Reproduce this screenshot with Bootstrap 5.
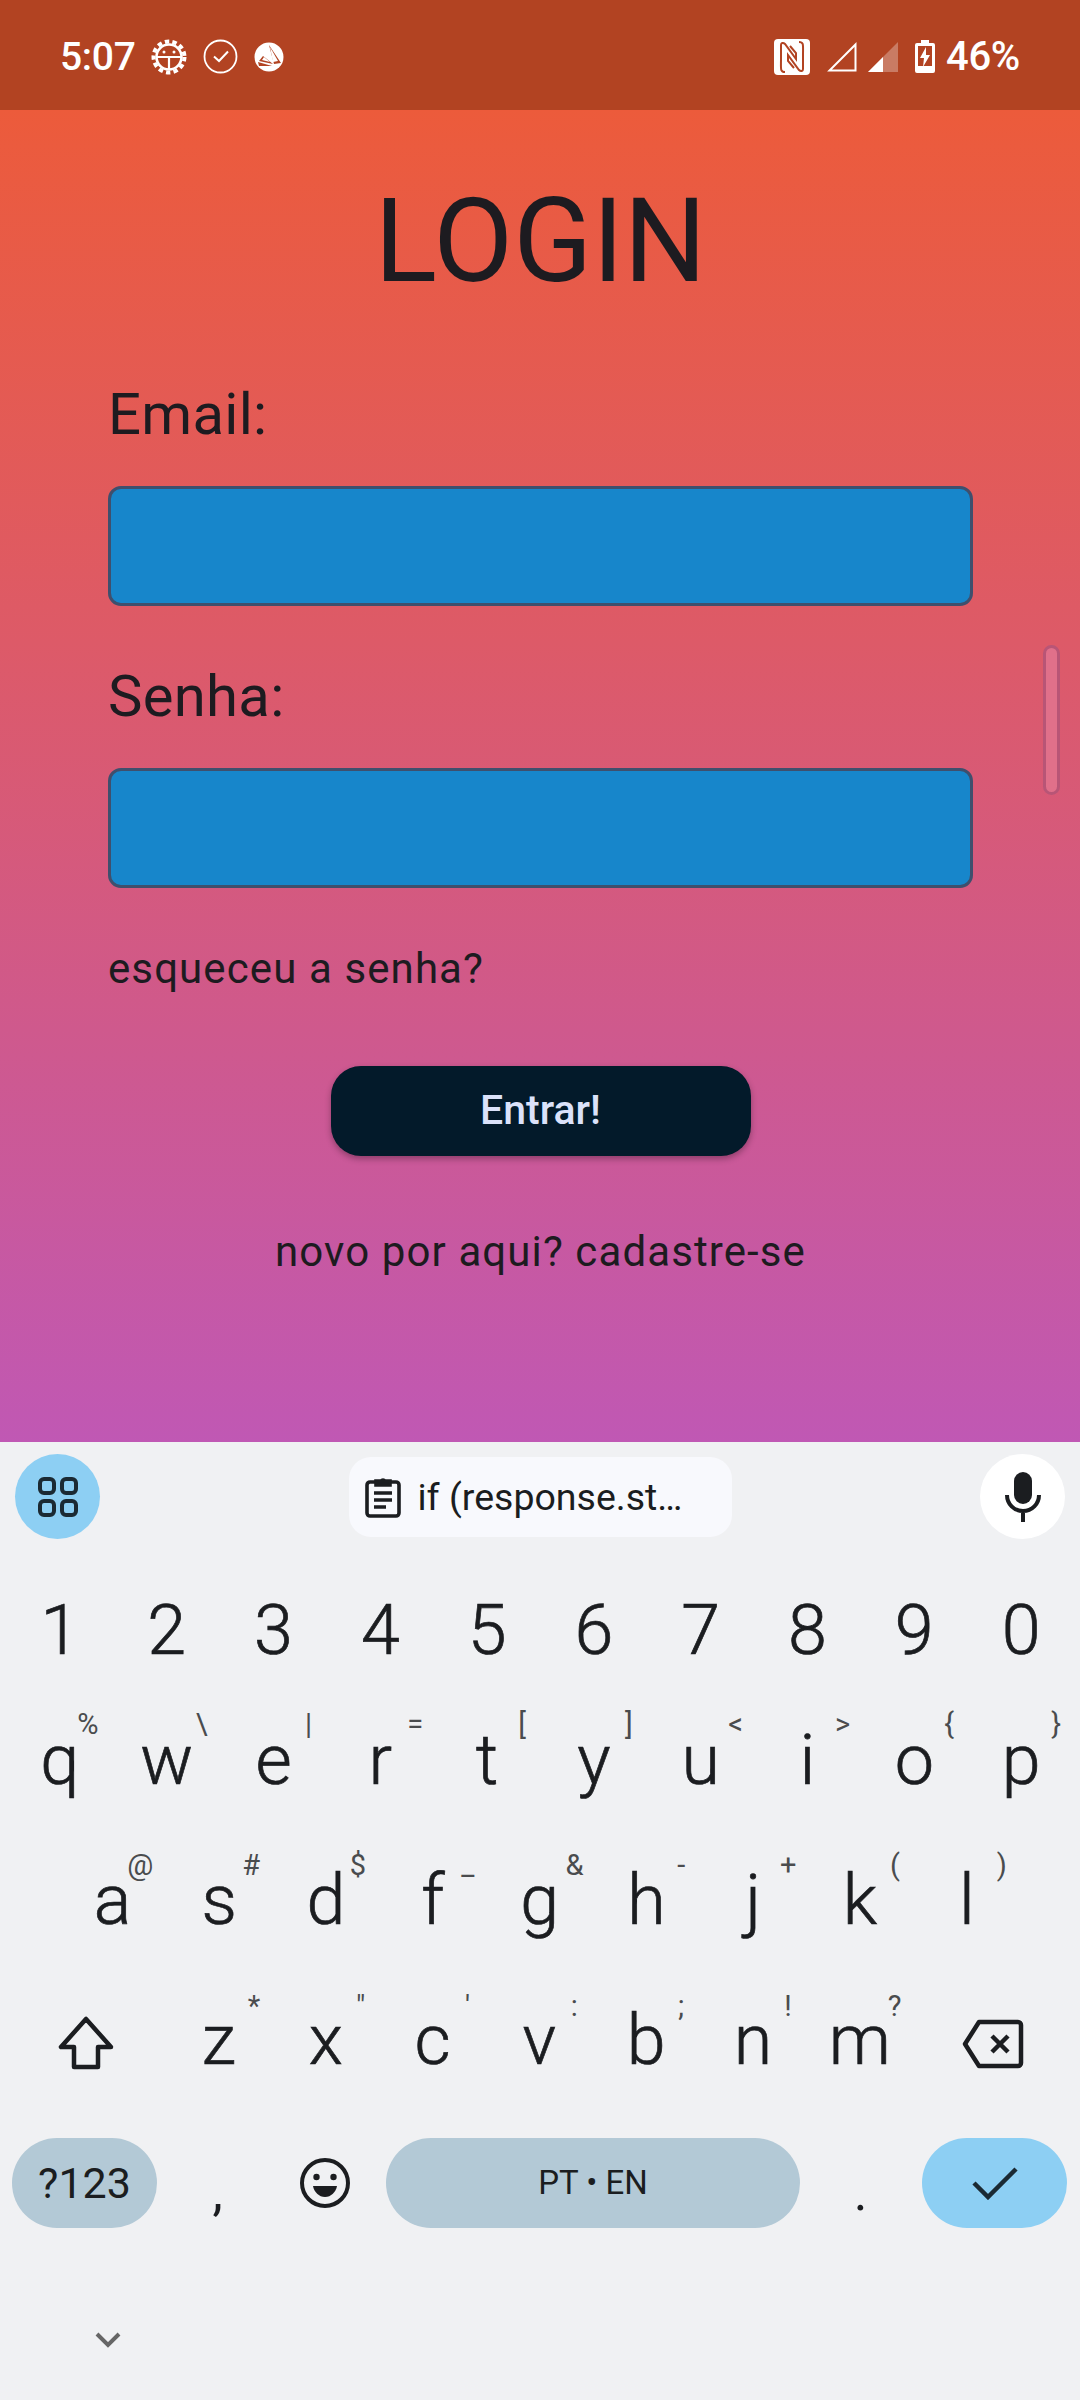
<!DOCTYPE html>
<html lang="pt">
<head>
<meta charset="utf-8">
<title>Login</title>
<link href="https://cdn.jsdelivr.net/npm/bootstrap@5.3.0/dist/css/bootstrap.min.css" rel="stylesheet">
<style>
html,body{margin:0;height:2400px;overflow:hidden}
body{font-family:Roboto,"Liberation Sans",sans-serif;color:#1d1b20;background:#f0f1f3}
.screen{height:2400px;width:1080px}
.sbar{height:110px;background:#b24322;color:#fff;padding:3px 60px 0 60px;flex:none}
.sbar-text{font-size:39px;font-weight:500;line-height:50px;letter-spacing:-.3px}
.sbar-time{margin-right:15px}
.sbar svg{display:block;flex:none}
.batt-text{margin-left:11px;font-size:40px}
.gap17{margin-left:17px}
.gap11{margin-left:11px}
.app{flex:none;height:1332px;background:linear-gradient(180deg,#ec5b3b 0%,#dd5a68 40%,#c058b4 100%);padding:73px 107px 0 108px;position:relative}
.title{font-size:116px;font-weight:400;line-height:116px;margin:0 0 83px;text-align:center;color:#1d1b20}
.flabel{font-size:58px;letter-spacing:.3px;line-height:64px;margin:0 0 40px;color:#1d1b20;display:block}
.finput.form-control{height:120px;background:#1786cb;border:3px solid #3f4f6d;border-radius:13px;box-shadow:none}
.flabel.second{margin-top:58px}
.linkline{font-size:42px;letter-spacing:1.1px;line-height:50px;color:#1d1b20;margin:56px 0 0}
.enter.btn{width:420px;height:90px;background:#031a2a;color:#dbe2fa;border:0;border-radius:30px;font-size:41px;font-weight:500;box-shadow:0 3px 6px rgba(0,0,0,.3);margin:72px auto 0;display:block}
.linkline.center{margin-top:71px;text-align:center}
.sthumb{position:absolute;left:1043px;top:535px;width:17px;height:150px;border-radius:9px;background:#e0708a;border:3px solid #b85576}
.kb{background:#f0f1f3;flex:1 1 auto;color:#1b1d20}
.tools{height:123px;padding:12px 15px 0}
.tcircle{width:85px;height:85px;border-radius:50%}
.tblue{background:#8dcff3}
.twhite{background:#fff}
.chip{width:383px;height:80px;margin-top:3px;background:#f8f9fd;border-radius:22px;padding-left:16px;font-size:37.5px;line-height:80px;white-space:nowrap}
.chip svg{margin-right:17px;flex:none}
.krow{height:130px;padding:0 6px 0 6.5px}
.krow.tall{height:140px}
.krow.ind{padding:0 59px}
.krow.first{margin-top:5px}
.key{width:106.8px;flex:none;height:100%;position:relative;font-size:70px;font-weight:300;-webkit-text-stroke:.7px #1b1d20;line-height:1;text-align:center}
.key svg{display:block}
.wide{width:159px;flex:none;height:100%}
.wide.shifted{padding-top:5px}
.wide.shifted2{padding-top:8px}
.hint{position:absolute;left:calc(50% + 35px);transform:translateX(-50%);font-size:29px;line-height:29px;color:#4a4c4e;font-weight:400;-webkit-text-stroke:0;white-space:nowrap}
.h1{top:15px}
.h2{top:21px}
.h3{top:22px}
.near{left:calc(50% + 28px)}
.mid{left:calc(50% + 32px)}
.bottomrow{height:140px;padding-left:12px;margin-top:3px}
.pill{height:90px;border-radius:45px;flex:none}
.pgrey{background:#b3c9d6}
.num{width:145px;font-size:43px}
.space{width:414px;font-size:33px;margin-left:8px}
.done{width:145px;margin-left:8px}
.comma{margin-left:7px;font-size:52px;font-weight:400;-webkit-text-stroke:0;line-height:1;width:107px;height:auto;padding-top:20px}
.emoji{width:107px;flex:none}
.period{margin-left:7px;font-size:52px;font-weight:400;-webkit-text-stroke:0;width:107px;height:auto;padding-top:20px}
.kfoot{height:147px;padding:74px 0 0 95px}
</style>
</head>
<body>
<div class="screen d-flex flex-column">
  <div class="sbar d-flex align-items-center justify-content-between">
    <div class="d-flex align-items-center">
      <span class="sbar-text sbar-time">5:07</span>
      <svg width="36" height="36" viewBox="0 0 36 36" fill="none" stroke="#fff"><circle cx="18" cy="18" r="15.5" stroke-width="4" stroke-dasharray="4.4 3.2"/><circle cx="18" cy="18" r="12.5" stroke-width="2.6"/><path d="M6 18h24M18 18v13" stroke-width="2.2"/><circle cx="13" cy="13" r="1.5" fill="#fff" stroke="none"/><circle cx="23" cy="13" r="1.5" fill="#fff" stroke="none"/></svg>
      <svg class="ms-3" width="35" height="35" viewBox="0 0 35 35" fill="none" stroke="#fff"><circle cx="17.5" cy="17.5" r="16" stroke-width="1.8"/><path d="M11 17.5l5 4.500 9-9.500" stroke-width="2"/></svg>
      <svg class="ms-3" width="30" height="30" viewBox="0 0 30 30"><circle cx="15" cy="15" r="14.500" fill="#fff"/><path d="M15 3l12 18-7 1zM9 14l10 8-14-3zM4 20l14 4-13 0z" fill="#b24322"/><path d="M16 5l8 14-5 1z" fill="#fff"/><path d="M10 15l6 5-8-2z" fill="#fff"/></svg>
    </div>
    <div class="d-flex align-items-center">
      <svg width="36" height="36" viewBox="0 0 36 36" fill="none"><rect width="36" height="36" rx="4" fill="#fff"/><path d="M11 33C6 33 7 30 7 20V6C7 4 9 3 11 5L22 20V14L16 7M25 3C30 3 29 6 29 16V30C29 32 27 33 25 31L14 16V22L20 29" stroke="#b24322" stroke-width="2"/></svg>
      <svg class="gap17" width="30" height="30" viewBox="0 0 30 30" fill="none" stroke="#fff" stroke-width="2"><path d="M28.500 2.500v26H2.500z"/></svg>
      <svg class="gap11" width="30" height="30" viewBox="0 0 30 30"><path d="M30 0v30H0z" fill="#fff" opacity=".3"/><path d="M15 15v15H0z" fill="#fff"/></svg>
      <svg class="gap17" width="20" height="33" viewBox="0 0 20 33"><path d="M6 0h8v3h4a2 2 0 0 1 2 2v26a2 2 0 0 1-2 2H2a2 2 0 0 1-2-2V5a2 2 0 0 1 2-2h4z" fill="#fff"/><path d="M3 6h14v20H3z" fill="#b24322"/><path d="M11 7l-6 11h4l-1 9 7-12h-4z" fill="#fff"/></svg>
      <span class="sbar-text batt-text">46%</span>
    </div>
  </div>
  <main class="app">
    <h1 class="title">LOGIN</h1>
    <form>
      <label class="flabel" for="em">Email:</label>
      <input id="em" class="form-control finput" type="email">
      <label class="flabel second" for="pw">Senha:</label>
      <input id="pw" class="form-control finput" type="password">
      <p class="linkline">esqueceu a senha?</p>
      <button type="button" class="btn enter">Entrar!</button>
      <p class="linkline center">novo por aqui? cadastre-se</p>
    </form>
    <div class="sthumb"></div>
  </main>
  <section class="kb">
    <div class="tools d-flex justify-content-between align-items-start">
      <div class="tcircle tblue d-flex align-items-center justify-content-center">
        <svg width="42" height="42" viewBox="0 0 42 42" fill="none" stroke="#1b2a33" stroke-width="4"><rect x="3" y="3" width="14" height="14" rx="4"/><rect x="25" y="3" width="14" height="14" rx="4"/><rect x="3" y="25" width="14" height="14" rx="4"/><rect x="25" y="25" width="14" height="14" rx="4"/></svg>
      </div>
      <div class="chip d-flex align-items-center">
        <svg width="36" height="42" viewBox="0 0 36 42" fill="none" stroke="#1b1d20" stroke-width="3.600"><path d="M11 6H5a3 3 0 0 0-3 3v28a3 3 0 0 0 3 3h26a3 3 0 0 0 3-3V9a3 3 0 0 0-3-3h-6"/><path d="M11 9V5h5a2.500 2.500 0 0 1 4 0h5v4z" fill="#1b1d20"/><path d="M9 17h18M9 24h18M9 31h12"/></svg>
        <span>if (response.st…</span>
      </div>
      <div class="tcircle twhite d-flex align-items-center justify-content-center">
        <svg width="36" height="50" viewBox="0 0 36 50"><rect x="9" y="0" width="18" height="32" rx="9" fill="#1b1d20"/><path d="M2 23c0 9 7 16 16 16s16-7 16-16M18 39v11" fill="none" stroke="#1b1d20" stroke-width="4"/></svg>
      </div>
    </div>
    <div class="krow d-flex">
      <div class="key d-flex align-items-center justify-content-center">1</div><div class="key d-flex align-items-center justify-content-center">2</div><div class="key d-flex align-items-center justify-content-center">3</div><div class="key d-flex align-items-center justify-content-center">4</div><div class="key d-flex align-items-center justify-content-center">5</div><div class="key d-flex align-items-center justify-content-center">6</div><div class="key d-flex align-items-center justify-content-center">7</div><div class="key d-flex align-items-center justify-content-center">8</div><div class="key d-flex align-items-center justify-content-center">9</div><div class="key d-flex align-items-center justify-content-center">0</div>
    </div>
    <div class="krow d-flex">
      <div class="key d-flex align-items-center justify-content-center">q<span class="hint h1 near">%</span></div>
      <div class="key d-flex align-items-center justify-content-center">w<span class="hint h1">\</span></div>
      <div class="key d-flex align-items-center justify-content-center">e<span class="hint h1">|</span></div>
      <div class="key d-flex align-items-center justify-content-center">r<span class="hint h1">=</span></div>
      <div class="key d-flex align-items-center justify-content-center">t<span class="hint h1">[</span></div>
      <div class="key d-flex align-items-center justify-content-center">y<span class="hint h1">]</span></div>
      <div class="key d-flex align-items-center justify-content-center">u<span class="hint h1">&lt;</span></div>
      <div class="key d-flex align-items-center justify-content-center">i<span class="hint h1">&gt;</span></div>
      <div class="key d-flex align-items-center justify-content-center">o<span class="hint h1">{</span></div>
      <div class="key d-flex align-items-center justify-content-center">p<span class="hint h1">}</span></div>
    </div>
    <div class="krow tall ind d-flex first">
      <div class="key d-flex align-items-center justify-content-center">a<span class="hint h2 near">@</span></div>
      <div class="key d-flex align-items-center justify-content-center">s<span class="hint h2 mid">#</span></div>
      <div class="key d-flex align-items-center justify-content-center">d<span class="hint h2 mid">$</span></div>
      <div class="key d-flex align-items-center justify-content-center">f<span class="hint h2">_</span></div>
      <div class="key d-flex align-items-center justify-content-center">g<span class="hint h2">&amp;</span></div>
      <div class="key d-flex align-items-center justify-content-center">h<span class="hint h2">-</span></div>
      <div class="key d-flex align-items-center justify-content-center">j<span class="hint h2">+</span></div>
      <div class="key d-flex align-items-center justify-content-center">k<span class="hint h2">(</span></div>
      <div class="key d-flex align-items-center justify-content-center">l<span class="hint h2">)</span></div>
    </div>
    <div class="krow tall d-flex">
      <div class="wide shifted d-flex align-items-center justify-content-center">
        <svg width="58" height="56" viewBox="0 0 58 56" fill="none" stroke="#1b1d20" stroke-width="4.500" stroke-linejoin="round"><path d="M29 4L4 32h13v20h24V32h13z"/></svg>
      </div>
      <div class="key d-flex align-items-center justify-content-center">z<span class="hint h3">*</span></div>
      <div class="key d-flex align-items-center justify-content-center">x<span class="hint h3">"</span></div>
      <div class="key d-flex align-items-center justify-content-center">c<span class="hint h3">'</span></div>
      <div class="key d-flex align-items-center justify-content-center">v<span class="hint h3">:</span></div>
      <div class="key d-flex align-items-center justify-content-center">b<span class="hint h3">;</span></div>
      <div class="key d-flex align-items-center justify-content-center">n<span class="hint h3">!</span></div>
      <div class="key d-flex align-items-center justify-content-center">m<span class="hint h3">?</span></div>
      <div class="wide shifted2 d-flex align-items-center justify-content-center">
        <svg width="62" height="50" viewBox="0 0 62 50" fill="none" stroke="#1b1d20" stroke-width="4.500" stroke-linejoin="round"><path d="M17 3h39a3 3 0 0 1 3 3v38a3 3 0 0 1-3 3H17L3 25z"/><path d="M30 17l16 16M46 17L30 33"/></svg>
      </div>
    </div>
    <div class="bottomrow d-flex align-items-center">
      <div class="pill pgrey num d-flex align-items-center justify-content-center">?123</div>
      <div class="key comma text-center">,</div>
      <div class="emoji d-flex justify-content-center">
        <svg width="50" height="50" viewBox="0 0 50 50"><circle cx="25" cy="25" r="23" fill="none" stroke="#1b1d20" stroke-width="4"/><circle cx="16.500" cy="19" r="3.200" fill="#1b1d20"/><circle cx="33.500" cy="19" r="3.200" fill="#1b1d20"/><path d="M13 28h24c-1 6-6 11-12 11s-11-5-12-11z" fill="#1b1d20"/></svg>
      </div>
      <div class="pill pgrey space d-flex align-items-center justify-content-center">PT • EN</div>
      <div class="key period text-center">.</div>
      <div class="pill tblue done d-flex align-items-center justify-content-center">
        <svg width="46" height="34" viewBox="0 0 46 34" fill="none" stroke="#1b2a33" stroke-width="4.500"><path d="M2 17l14 14L44 3"/></svg>
      </div>
    </div>
    <div class="kfoot">
      <svg width="26" height="16" viewBox="0 0 26 16" fill="none" stroke="#666" stroke-width="4"><path d="M2 2l11 11L24 2"/></svg>
    </div>
  </section>
</div>
</body>
</html>
